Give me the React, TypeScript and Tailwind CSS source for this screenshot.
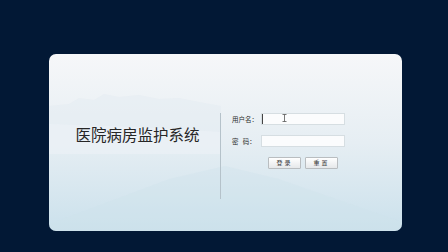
import { useState } from 'react';

const cjk = '"Noto Sans CJK SC", "Noto Sans", sans-serif';

function Field({ label, caret }: { label: React.ReactNode; caret?: boolean }) {
  const [value, setValue] = useState('');
  return (
    <div className="flex items-center h-[12px] leading-none">
      <span className="w-[29px] text-[6.5px] leading-none text-[#2a2a2a]">{label}</span>
      <div className="relative w-[84px] h-[12px]">
        <input value={value} onChange={e => setValue(e.target.value)}
          className="block w-full h-full bg-[#fbfcfd] border border-[#d6dee2] outline-none text-[7px] px-[2px]" />
        {caret && (
          <>
            <span className="absolute left-[1px] top-[1px] w-[1px] h-[10px] bg-[#444]" />
            <svg className="absolute left-[21px] top-[1px]" width="5" height="8" viewBox="0 0 5 8">
              <path d="M0.5 0.5h4M2.5 0.5v7M0.5 7.5h4" stroke="#555" strokeWidth="0.8" fill="none" />
            </svg>
          </>
        )}
      </div>
    </div>
  );
}

function Btn({ children }: { children: React.ReactNode }) {
  return (
    <button className="h-[12px] w-[33px] text-[6px] leading-none text-[#333] border border-[#b9bdc0] rounded-[1px] bg-gradient-to-b from-[#ffffff] to-[#e6e8ea] tracking-[2px]">
      {children}
    </button>
  );
}

export default function App() {
  return (
    <div className="w-[448px] h-[252px] bg-[#021835] pt-[54px] pl-[49px]" style={{ fontFamily: cjk }}>
      <div className="relative w-[353px] h-[177px] rounded-[7px] overflow-hidden bg-gradient-to-b from-[#f6f7f9] via-[#e6eef3] to-[#cbe1ec]">
        <svg className="absolute inset-0" width="353" height="177" viewBox="0 0 353 177">
          <path d="M0 52 L20 50 L30 44 L45 46 L55 40 L70 43 L90 41 L110 45 L130 44 L150 48 L172 52 L172 90 L0 90 Z" fill="#e3ebf1" opacity="0.5" />
          <path d="M0 70 L60 72 L110 74 L172 78 L172 100 L0 100 Z" fill="#edf2f6" opacity="0.6" />
          <path d="M0 170 L120 125 L176 112 L230 125 L353 168 L353 177 L0 177 Z" fill="#cde1ec" opacity="0.35" />
        </svg>
        <div className="relative flex pt-[59px]">
          <div className="w-[172px] h-[86px] border-r border-[#b5c2ca] flex justify-center pt-[14px]">
            <h1 className="text-[15.5px] leading-none text-[#262626] pl-[6px]" style={{ fontFamily: '"Noto Sans CJK SC", serif', fontWeight: 400 }}>
              医院病房监护系统
            </h1>
          </div>
          <div className="pl-[11px] flex flex-col gap-[10px]">
            <Field label="用户名：" caret />
            <Field label={<span>密&nbsp;&nbsp;&nbsp;码：</span>} />
            <div className="flex gap-[4px] pl-[36px]">
              <Btn>登录</Btn>
              <Btn>重置</Btn>
            </div>
          </div>
        </div>
      </div>
    </div>
  );
}
